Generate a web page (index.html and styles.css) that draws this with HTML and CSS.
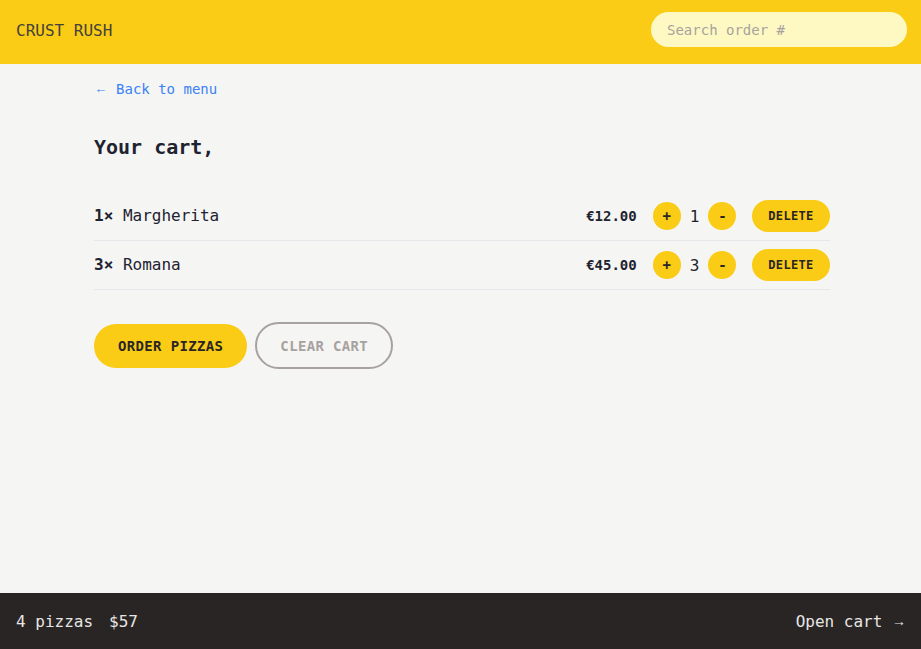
FILE: index.html
```html
<!DOCTYPE html>
<html lang="en">
<head>
<meta charset="utf-8">
<title>Crust Rush — Cart</title>
<link rel="stylesheet" href="styles.css">
</head>
<body>
<div class="app">
  <header class="header">
    <a class="logo" href="#">CRUST RUSH</a>
    <input class="search" type="text" placeholder="Search order #">
  </header>
  <main class="main">
    <div class="container">
      <a class="back" href="#"><span class="arrow-l">&larr;</span> Back to menu</a>
      <h2 class="title">Your cart,</h2>
      <ul class="items">
        <li class="item">
          <p class="name"><b>1&times;</b> Margherita</p>
          <div class="controls">
            <p class="price">&euro;12.00</p>
            <div class="qty">
              <button class="round">+</button>
              <span class="count">1</span>
              <button class="round">-</button>
            </div>
            <button class="small">Delete</button>
          </div>
        </li>
        <li class="item">
          <p class="name"><b>3&times;</b> Romana</p>
          <div class="controls">
            <p class="price">&euro;45.00</p>
            <div class="qty">
              <button class="round">+</button>
              <span class="count">3</span>
              <button class="round">-</button>
            </div>
            <button class="small">Delete</button>
          </div>
        </li>
      </ul>
      <div class="actions">
        <button class="primary">Order pizzas</button>
        <button class="secondary">Clear cart</button>
      </div>
    </div>
  </main>
  <footer class="footer">
    <p class="summary"><span>4 pizzas</span><span>$57</span></p>
    <a class="open" href="#">Open cart <span class="arrow-r">&rarr;</span></a>
  </footer>
</div>
</body>
</html>
```
FILE: styles.css
```css
* { box-sizing: border-box; margin: 0; padding: 0; }
html, body { height: 100%; }
body {
  font-family: "DejaVu Sans Mono", "Liberation Mono", monospace;
  background: #f5f5f4;
  color: #1e2330;
}
.app {
  display: grid;
  grid-template-rows: 64px 1fr 56px;
  height: 100vh;
}
a { text-decoration: none; }
button { font-family: inherit; border: none; cursor: pointer; }

.header {
  background: #facc15;
  display: flex;
  align-items: center;
  justify-content: space-between;
  padding: 0 14px 0 16px;
}
.logo { color: #44403c; font-size: 16px; margin-bottom: 4px; }
.search {
  width: 256px;
  height: 35px;
  border: none;
  border-radius: 999px;
  background: #fef9c3;
  padding: 0 16px;
  font-family: inherit;
  font-size: 14px;
  color: #44403c;
  outline: none;
  margin-bottom: 5px;
}
.search::placeholder { color: #a8a29e; }

.main { overflow: auto; }
.container {
  max-width: 768px;
  margin: 0 auto;
  padding: 15px 15px 0 17.5px;
}
.back {
  display: block;
  height: 20px;
  font-size: 14px;
  line-height: 20px;
  color: #3b82f6;
}
.arrow-l {
  display: inline-block;
  width: 13.6px;
  line-height: 0;
  font-family: "Liberation Sans", sans-serif;
  font-size: 13px;
  text-align: center;
  vertical-align: 1px;
}
.title {
  margin-top: 34px;
  font-size: 20px;
  line-height: 28px;
  font-weight: bold;
}
.items {
  list-style: none;
  margin-top: 31px;
  border-bottom: 1px solid #e5e7eb;
}
.item {
  display: flex;
  align-items: center;
  justify-content: space-between;
  padding: 8px 0;
}
.item + .item { border-top: 1px solid #e5e7eb; }
.name { font-size: 16px; line-height: 24px; }
.controls {
  display: flex;
  align-items: center;
  gap: 16px;
}
.price { font-size: 14px; font-weight: bold; }
.qty { display: flex; align-items: center; gap: 9px; }
.count { font-size: 16px; }
.round {
  width: 28px;
  height: 28px;
  border-radius: 50%;
  background: #facc15;
  color: #292524;
  font-size: 14px;
  font-weight: bold;
}
.small {
  height: 32px;
  padding: 0 16px;
  border-radius: 999px;
  background: #facc15;
  color: #292524;
  font-size: 12px;
  font-weight: bold;
  letter-spacing: 0.025em;
  text-transform: uppercase;
}
.actions {
  display: flex;
  align-items: center;
  gap: 8px;
  margin-top: 32px;
}
.primary {
  height: 44px;
  padding: 0 24px;
  border-radius: 999px;
  background: #facc15;
  color: #292524;
  font-size: 14px;
  font-weight: bold;
  letter-spacing: 0.025em;
  text-transform: uppercase;
}
.secondary {
  height: 47px;
  padding: 0 23px;
  border-radius: 999px;
  background: transparent;
  border: 2px solid #a8a29e;
  color: #a8a29e;
  font-size: 14px;
  font-weight: bold;
  letter-spacing: 0.025em;
  text-transform: uppercase;
}

.footer {
  background: #292524;
  color: #e7e5e4;
  display: flex;
  align-items: center;
  justify-content: space-between;
  padding: 0 16px;
  font-size: 16px;
}
.summary { display: flex; gap: 16px; }
.open { color: #e7e5e4; }
.arrow-r {
  display: inline-block;
  width: 13px;
  line-height: 0;
  font-family: "Liberation Sans", sans-serif;
  font-size: 14px;
  text-align: right;
  vertical-align: 1px;
}
```
